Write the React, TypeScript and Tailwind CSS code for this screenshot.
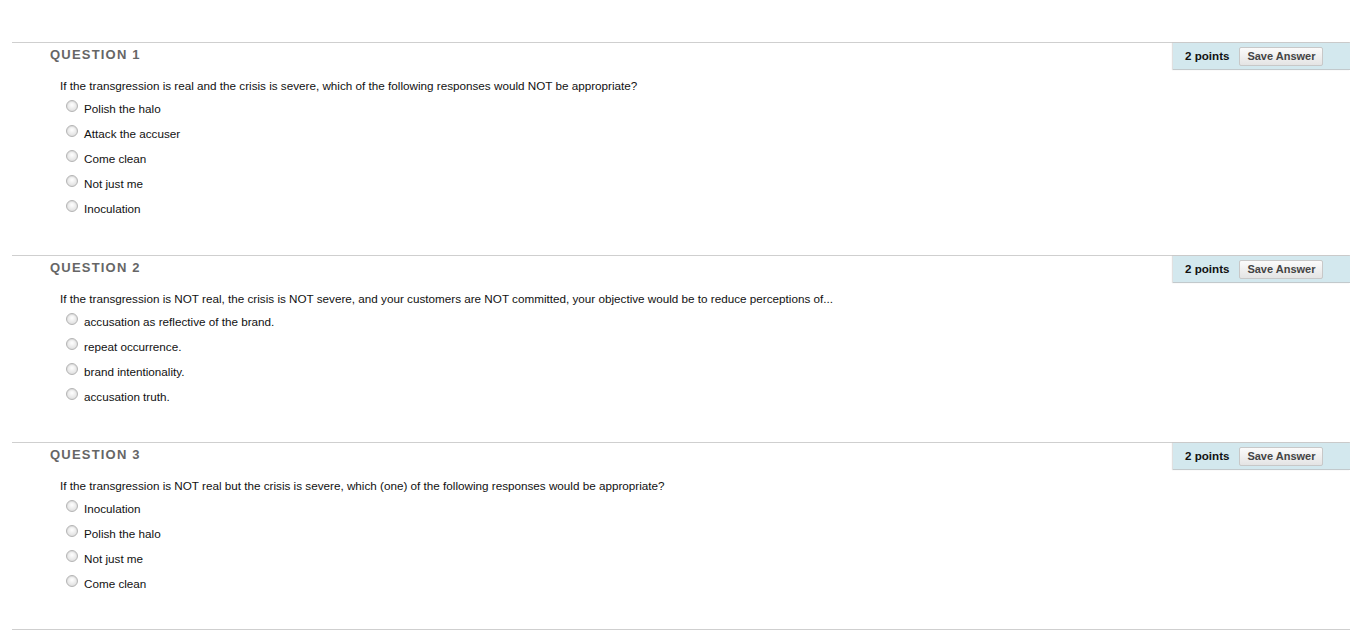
import React from 'react';

type Question = {
  num: number;
  text: string;
  options: string[];
};

const questions: Question[] = [
  {
    num: 1,
    text: 'If the transgression is real and the crisis is severe, which of the following responses would NOT be appropriate?',
    options: ['Polish the halo', 'Attack the accuser', 'Come clean', 'Not just me', 'Inoculation'],
  },
  {
    num: 2,
    text: 'If the transgression is NOT real, the crisis is NOT severe, and your customers are NOT committed, your objective would be to reduce perceptions of...',
    options: ['accusation as reflective of the brand.', 'repeat occurrence.', 'brand intentionality.', 'accusation truth.'],
  },
  {
    num: 3,
    text: 'If the transgression is NOT real but the crisis is severe, which (one) of the following responses would be appropriate?',
    options: ['Inoculation', 'Polish the halo', 'Not just me', 'Come clean'],
  },
];

const Radio = () => (
  <span className="inline-block w-[12px] h-[12px] rounded-full border border-[#b4b4b4] bg-[radial-gradient(circle_at_50%_40%,#ffffff_0%,#e9e9e9_55%,#d2d2d2_100%)] shadow-[inset_0_1px_1px_rgba(0,0,0,0.08)] -mt-[5px]" />
);

const QuestionBlock = ({ q, first }: { q: Question; first: boolean }) => (
  <div className={first ? 'border-t border-[#cfcfcf] pb-[34px]' : 'border-t border-[#cfcfcf] pb-[33px]'}>
    {/* header row */}
    <div className="flex justify-between items-start h-[27px]">
      <h3 className="pl-[38px] pt-[4px] text-[13px] leading-[16px] font-bold tracking-[1.2px] text-[#666666]">
        QUESTION {q.num}
      </h3>
      <div className="w-[177px] h-[27px] bg-[#d3e8ee] border-b border-[#c2c9cc] shadow-[-1px_0_1px_rgba(0,0,0,0.12)] flex items-center pl-[12px] gap-[10px]">
        <span className="text-[11.6px] font-bold text-[#111]">2 points</span>
        <button className="h-[19px] w-[84px] border border-[#c8c8c8] rounded-[2px] bg-gradient-to-b from-[#fbfbfb] to-[#e4e4e4] text-[11px] font-bold text-[#444] leading-none">
          Save Answer
        </button>
      </div>
    </div>
    <p className="pl-[48px] mt-[8px] text-[11.7px] leading-[16px] text-[#111]">{q.text}</p>
    <ul className="mt-[2px] pl-[54px]">
      {q.options.map((o) => (
        <li key={o} className="h-[25px] flex items-center gap-[6px] text-[11.7px] text-[#111]">
          <Radio />
          <span>{o}</span>
        </li>
      ))}
    </ul>
  </div>
);

export default function App() {
  return (
    <div className="min-h-screen bg-white font-['Liberation_Sans',Arial,sans-serif] pt-[42px] pl-[12px] pr-[13px]">
      {questions.map((q, i) => (
        <QuestionBlock key={q.num} q={q} first={i === 0} />
      ))}
      <div className="border-t border-[#cfcfcf]" />
    </div>
  );
}
